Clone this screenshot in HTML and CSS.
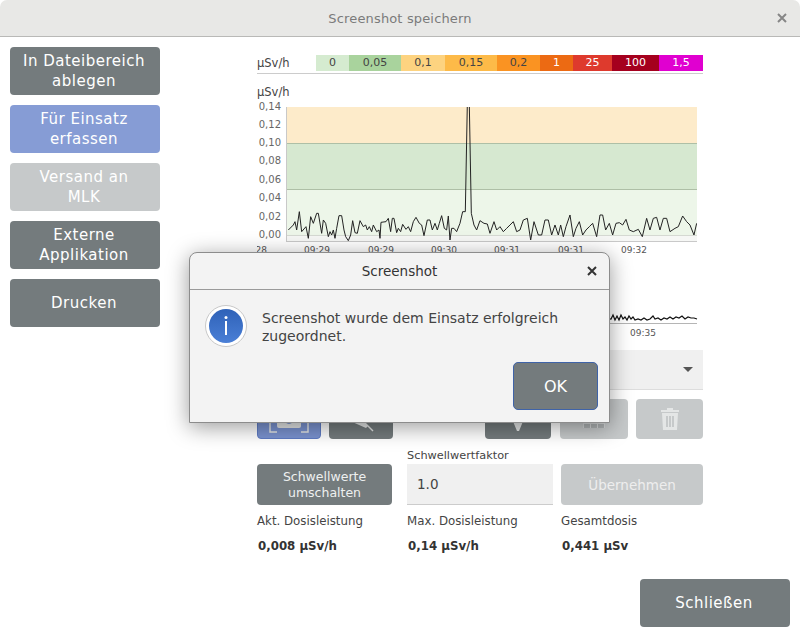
FILE: index.html
```html
<!DOCTYPE html>
<html lang="de">
<head>
    <meta charset="UTF-8">
    <title>Screenshot speichern</title>
    <link rel="stylesheet" href="styles.css">
</head>
<body>
    <div class="window">
        <div class="titlebar">
            <span>Screenshot speichern</span>
            <svg class="close-icon" width="10" height="10" viewBox="0 0 10 10"><path d="M1 1L9 9M9 1L1 9"/></svg>
        </div>

        <div class="main">
            <div class="side">
                <button class="btn">In Dateibereich ablegen</button>
                <button class="btn btn-blue">Für Einsatz erfassen</button>
                <button class="btn btn-off">Versand an MLK</button>
                <button class="btn">Externe Applikation</button>
                <button class="btn">Drucken</button>
            </div>

            <div class="content">
                <div class="legend-row">
                    <span class="legend-unit">µSv/h</span>
                    <div class="legend">
                        <span class="l1">0</span>
                        <span class="l2">0,05</span>
                        <span class="l3">0,1</span>
                        <span class="l4">0,15</span>
                        <span class="l5">0,2</span>
                        <span class="l6">1</span>
                        <span class="l7">25</span>
                        <span class="l8">100</span>
                        <span class="l9">1,5</span>
                    </div>
                </div>

                <svg class="chart" width="446" height="180" viewBox="257 82 446 180">
                    <text class="unit" x="257" y="96">µSv/h</text>
                    <rect x="287" y="107" width="410" height="36" fill="#fdebca"/>
                    <rect x="287" y="143" width="410" height="46" fill="#d6e8d0"/>
                    <rect x="287" y="189" width="410" height="46" fill="#edf6e9"/>
                    <rect x="287" y="235" width="410" height="6" fill="#f6f7f5"/>
                    <path class="limit" d="M287 143.500H697M287 189.500H697"/>
                    <path class="grid-low" d="M287 235.500H697"/>
                    <path class="axis" d="M286.500 107V242M286 241.500H697"/>
                    <g class="ylabels">
                        <text x="281" y="110">0,14</text>
                        <text x="281" y="128">0,12</text>
                        <text x="281" y="146">0,10</text>
                        <text x="281" y="164">0,08</text>
                        <text x="281" y="183">0,06</text>
                        <text x="281" y="201">0,04</text>
                        <text x="281" y="220">0,02</text>
                        <text x="281" y="238">0,00</text>
                    </g>
                    <g class="xlabels">
                        <text x="254" y="253">09:28</text>
                        <text x="317" y="253">09:29</text>
                        <text x="381" y="253">09:29</text>
                        <text x="444" y="253">09:30</text>
                        <text x="507" y="253">09:31</text>
                        <text x="571" y="253">09:31</text>
                        <text x="634" y="253">09:32</text>
                    </g>
                    <svg x="287" y="107" width="410" height="134" viewBox="287 107 410 134">
                        <polyline class="trace" transform="translate(280 180) scale(.3333)" points="25,150 40,135 45,125 50,150 58,95 65,155 78,140 85,175 92,110 100,130 110,100 115,100 125,160 130,120 137,130 145,170 150,155 155,165 160,150 165,175 170,145 177,107 185,107 192,150 197,170 205,182 212,165 218,122 225,158 232,160 240,122 250,140 257,135 262,150 268,140 275,155 280,135 290,155 297,150 300,175 303,127 318,125 325,115 332,155 337,115 342,115 350,158 355,145 362,155 368,133 378,148 385,140 392,155 400,125 408,112 418,130 425,135 432,167 442,120 450,120 457,150 465,130 472,150 478,130 485,107 493,145 500,150 505,108 510,180 515,145 522,145 530,155 540,130 548,95 556,95 562,-225 568,-225 574,100 582,135 590,150 600,122 612,130 622,132 630,160"/>
                        <polyline class="trace" transform="translate(490 180) scale(.3333)" points="0,160 12,125 20,150 30,140 40,155 50,145 60,135 70,125 80,155 90,150 100,120 112,115 122,180 132,125 145,165 155,165 165,120 175,120 185,165 195,135 205,165 212,135 220,170 228,140 240,105 250,170 258,145 268,125 278,165 288,150 298,140 308,130 320,170 330,105 338,105 347,150 358,130 368,165 378,130 388,128 398,135 408,118 418,150 430,155 445,148 457,170 470,115 480,150 490,115 500,112 510,150 520,115 530,115 540,155 555,145 565,140 578,108 590,125 600,135 612,165 620,130"/>
                    </svg>
                </svg>

                <svg class="chart" width="446" height="80" viewBox="257 262 446 80">
                    <path class="axis-dark" d="M440 323.500H697"/>
                    <polyline class="trace-small" points="600,318 611,319 613,315 615,320 617,316 619,320 621,315 623,319 625,317 627,320 629,316 631,319 633,317 635,320 638,319 641,320 644,318 647,320 650,319 653,316 655,319 658,318 661,320 664,318 667,319 670,317 673,319 676,317 679,318 682,316 685,319 688,317 691,318 694,318 697,319"/>
                    <g class="xlabels">
                        <text x="643" y="336">09:35</text>
                    </g>
                </svg>

                <div class="select-box">
                    <svg width="10" height="5" viewBox="0 0 10 5"><path d="M0 0H10L5 5Z"/></svg>
                </div>

                <div class="tools">
                    <button class="tool tool-blue">
                        <svg width="44" height="40" viewBox="0 0 44 40"><path class="ln" d="M3 24V33H10M41 24V33H34"/><rect class="fl" x="10" y="16" width="24" height="13" rx="2"/><circle class="hole" cx="22" cy="20" r="5"/></svg>
                    </button>
                    <button class="tool tool-dark">
                        <svg width="44" height="40" viewBox="0 0 44 40"><path class="fl" d="M11 22H24L29 27L27 29Z"/><path class="ln" d="M26 24L34 32"/></svg>
                    </button>
                    <span class="tool-gap"></span>
                    <button class="tool tool-wide tool-dark">
                        <svg width="20" height="40" viewBox="0 0 20 40"><path class="fl" d="M4 20H16L11 32H9Z"/></svg>
                    </button>
                    <button class="tool tool-wide2 tool-off">
                        <svg width="26" height="40" viewBox="0 0 26 40"><path class="fl" d="M2 14H24V29H2Z" opacity=".45"/><path class="grey" d="M3 25H9V29H3ZM10 25H16V29H10ZM17 25H23V29H17Z"/></svg>
                    </button>
                    <button class="tool tool-off">
                        <svg width="20" height="24" viewBox="0 0 20 24"><path class="fl" d="M7 1H13V3H19V5H1V3H7ZM2 6H18L17 23H3ZM6 9V20H8V9ZM9 9V20H11V9ZM12 9V20H14V9Z" fill-rule="evenodd"/></svg>
                    </button>
                </div>

                <div class="thresholds">
                    <span></span>
                    <label class="field-label">Schwellwertfaktor</label>
                    <span></span>
                    <button class="btn-small">Schwellwerte umschalten</button>
                    <div class="input">1.0</div>
                    <button class="btn-small btn-off">Übernehmen</button>
                    <span class="stat-label">Akt. Dosisleistung</span>
                    <span class="stat-label">Max. Dosisleistung</span>
                    <span class="stat-label">Gesamtdosis</span>
                    <b class="stat-value">0,008 µSv/h</b>
                    <b class="stat-value">0,14 µSv/h</b>
                    <b class="stat-value">0,441 µSv</b>
                </div>
            </div>
        </div>

        <div class="footer">
            <button class="btn">Schließen</button>
        </div>

        <div class="dialog">
            <div class="dialog-head">
                <span>Screenshot</span>
                <svg class="dialog-close" width="10" height="10" viewBox="0 0 10 10"><path d="M1 1L9 9M9 1L1 9"/></svg>
            </div>
            <div class="dialog-body">
                <svg class="info" width="42" height="42" viewBox="0 0 42 42">
                    <defs>
                        <linearGradient id="infoFill" x1="0" y1="0" x2="0" y2="1">
                            <stop offset="0" stop-color="#2f62b8"/>
                            <stop offset="1" stop-color="#4a7fd6"/>
                        </linearGradient>
                    </defs>
                    <circle cx="21" cy="21" r="20.500" fill="#fff" stroke="#c8c8c8"/>
                    <circle cx="21" cy="21" r="17" fill="url(#infoFill)"/>
                    <circle cx="21" cy="12.500" r="1.500" fill="#fff"/>
                    <rect x="20" y="16" width="2" height="14" fill="#fff"/>
                </svg>
                <p>Screenshot wurde dem Einsatz erfolgreich zugeordnet.</p>
            </div>
            <div class="dialog-foot">
                <button class="btn-ok">OK</button>
            </div>
        </div>
    </div>
</body>
</html>
```

FILE: styles.css
```css
* {
    box-sizing: border-box;
}
body {
    margin: 0;
    font-family: "DejaVu Sans", sans-serif;
    color: #444;
    background: #fff;
}
button {
    font-family: inherit;
    border: none;
    padding: 0;
}
.window {
    position: relative;
    width: 800px;
    height: 637px;
    display: flex;
    flex-direction: column;
    overflow: hidden;
}
.titlebar {
    position: relative;
    height: 37px;
    flex: none;
    display: flex;
    align-items: center;
    justify-content: center;
    background: #e8e8e6;
    border-bottom: 1px solid #b9b9b7;
    border-radius: 7px 7px 0 0;
    color: #7b7b7b;
    font-size: 13px;
    font-weight: 500;
    letter-spacing: 0.15px;
}
.close-icon {
    position: absolute;
    right: 13px;
    top: 13px;
}
.close-icon path {
    stroke: #868686;
    stroke-width: 2;
    fill: none;
}
.main {
    display: flex;
}
.side {
    width: 150px;
    margin-left: 10px;
    padding-top: 10px;
    display: flex;
    flex-direction: column;
    gap: 10px;
}
.btn {
    width: 150px;
    height: 48px;
    padding: 0 13px 0 11px;
    border-radius: 4px;
    background: #747b7d;
    color: #fff;
    font-size: 15px;
    letter-spacing: 0.5px;
    line-height: 20px;
    text-align: center;
}
.btn-blue {
    background: #869cd5;
}
.btn-off {
    background: #c6c9ca;
}
.content {
    width: 446px;
    margin-left: 97px;
}
.legend-row {
    height: 37px;
    padding-top: 18px;
    display: flex;
    align-items: flex-start;
    border-bottom: 1px solid #ccc;
}
.legend-unit {
    width: 59px;
    font-size: 11.500px;
    line-height: 16px;
}
.legend {
    display: flex;
    width: 387px;
    height: 16px;
    font-size: 11px;
    line-height: 16px;
    text-align: center;
}
.l1 { width: 33px; background: #d5ebd0; }
.l2 { width: 52px; background: #a9d39d; }
.l3 { width: 44px; background: #fdd380; }
.l4 { width: 52px; background: #fdba48; }
.l5 { width: 43px; background: #fa9322; }
.l6 { width: 33px; background: #ec6a13; color: #fff; }
.l7 { width: 39px; background: #de3a2d; color: #fff; }
.l8 { width: 47px; background: #a5001e; color: #fff; }
.l9 { width: 44px; background: #e000d0; color: #fff; }
.chart {
    display: block;
}
.legend-row + .chart {
    margin-top: 8px;
}
.unit {
    font-size: 11.500px;
    fill: #444;
}
.ylabels text {
    font-size: 10px;
    fill: #666;
    text-anchor: end;
}
.xlabels text {
    font-size: 9px;
    fill: #555;
    text-anchor: middle;
}
.limit {
    stroke: #aebfa6;
    stroke-width: 1;
    fill: none;
}
.grid-low {
    stroke: #d5d9d2;
    stroke-width: 1;
    fill: none;
}
.axis {
    stroke: #c9c9c9;
    stroke-width: 1;
    fill: none;
}
.axis-dark {
    stroke: #b5b5b5;
    stroke-width: 1;
    fill: none;
}
.trace {
    fill: none;
    stroke: #222;
    stroke-width: 3;
    stroke-linejoin: round;
}
.trace-small {
    fill: none;
    stroke: #111;
    stroke-width: 1.200;
}
.select-box {
    height: 40px;
    margin-top: 8px;
    padding-right: 10px;
    display: flex;
    align-items: center;
    justify-content: flex-end;
    background: #f0f0f0;
    border-bottom: 1px solid #ddd;
}
.select-box path {
    fill: #555;
}
.tools {
    height: 40px;
    margin-top: 9px;
    display: flex;
}
.tool {
    width: 64px;
    height: 40px;
    margin-right: 8px;
    border-radius: 4px;
    display: flex;
    align-items: center;
    justify-content: center;
}
.tool:last-child {
    width: 67px;
    margin-right: 0;
}
.tool-gap {
    width: 84px;
}
.tool-wide {
    width: 66px;
    margin-right: 9px;
}
.tool-wide2 {
    width: 68px;
}
.tool-blue {
    background: #7a92cf;
    border: 1px solid #5f7cc4;
    margin-right: 8px;
}
.tool-dark {
    background: #747b7d;
}
.tool-off {
    background: #c6c9ca;
}
.tool .fl {
    fill: #e4e6e6;
}
.tool .ln {
    fill: none;
    stroke: #e4e6e6;
    stroke-width: 1.500;
}
.tool .hole {
    fill: #7a92cf;
}
.tool .grey {
    fill: #aeb2b3;
}
.thresholds {
    margin-top: 9px;
    display: grid;
    grid-template-columns: 150px 154px 142px;
    grid-template-rows: 16px 41px 24px 16px;
    font-size: 11px;
}
.field-label {
    font-size: 11.300px;
    line-height: 16px;
    color: #444;
}
.btn-small {
    width: 135px;
    height: 41px;
    border-radius: 4px;
    background: #747b7d;
    color: #eef0f0;
    font-size: 12.500px;
    line-height: 16px;
}
.btn-small.btn-off {
    width: 142px;
    background: #c6c9ca;
    color: #eee;
    font-size: 13.500px;
}
.input {
    width: 146px;
    height: 41px;
    padding-left: 10px;
    display: flex;
    align-items: center;
    background: #f0f0f0;
    border-bottom: 1px solid #ccc;
    font-size: 13.500px;
}
.stat-label {
    align-self: end;
    padding-bottom: 1px;
    font-size: 11.800px;
    color: #444;
}
.stat-value {
    padding: 10px 0 0 1px;
    font-size: 11.800px;
    color: #333;
    white-space: nowrap;
}
.footer {
    margin-top: auto;
    padding: 0 10px 10px 0;
    display: flex;
    justify-content: flex-end;
}
.dialog {
    position: absolute;
    left: 189px;
    top: 252px;
    width: 421px;
    height: 171px;
    background: #f3f3f3;
    border: 1px solid #8c8c8c;
    border-radius: 8px 8px 0 0;
    box-shadow: 0 4px 22px rgba(0, 0, 0, 0.4);
}
.dialog-head {
    position: relative;
    height: 37px;
    display: flex;
    align-items: center;
    justify-content: center;
    border-bottom: 1px solid #9a9a9a;
    font-size: 13.500px;
    font-weight: 500;
    color: #333;
}
.dialog-close {
    position: absolute;
    right: 12px;
    top: 13px;
}
.dialog-close path {
    stroke: #333;
    stroke-width: 2;
    fill: none;
}
.dialog-body {
    display: flex;
    padding: 15px 0 0 15px;
}
.dialog-body p {
    width: 320px;
    margin: 4px 0 0 15px;
    font-size: 14px;
    line-height: 18px;
    color: #444;
}
.dialog-foot {
    position: absolute;
    right: 11px;
    bottom: 12px;
}
.btn-ok {
    width: 85px;
    height: 48px;
    border: 1px solid #3f63a8;
    border-radius: 5px;
    background: #747b7d;
    color: #fff;
    font-size: 16px;
}
```
